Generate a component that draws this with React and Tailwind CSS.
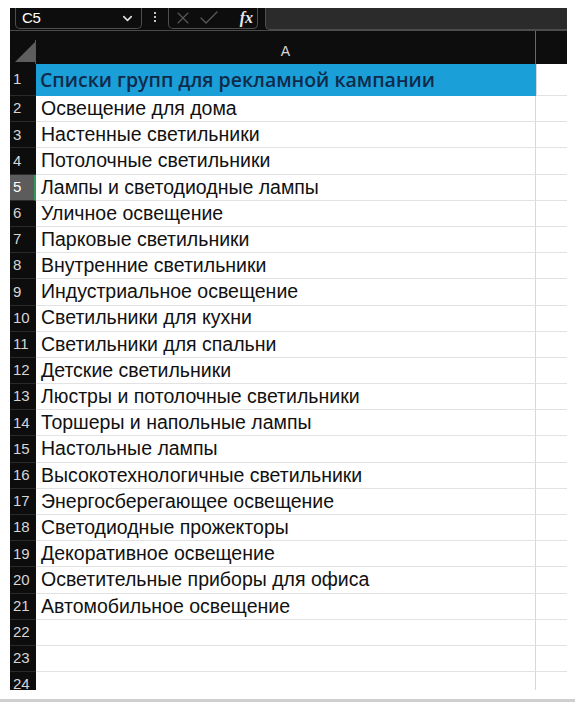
import React from 'react';
import { X, Check, ChevronDown } from 'lucide-react';

const items = [
  'Освещение для дома',
  'Настенные светильники',
  'Потолочные светильники',
  'Лампы и светодиодные лампы',
  'Уличное освещение',
  'Парковые светильники',
  'Внутренние светильники',
  'Индустриальное освещение',
  'Светильники для кухни',
  'Светильники для спальни',
  'Детские светильники',
  'Люстры и потолочные светильники',
  'Торшеры и напольные лампы',
  'Настольные лампы',
  'Высокотехнологичные светильники',
  'Энергосберегающее освещение',
  'Светодиодные прожекторы',
  'Декоративное освещение',
  'Осветительные приборы для офиса',
  'Автомобильное освещение',
  '',
  '',
  '',
];

function RowHead({ n, active }) {
  return (
    <div
      className={
        'w-[26px] shrink-0 flex items-center pl-[3px] text-[15px] border-b border-[#2a2a2a] ' +
        (active ? 'bg-[#5c5c5c] text-white border-r-2 border-r-[#2e9b5a]' : 'bg-[#0d0d0d] text-[#d6d6d6]')
      }
    >
      {n}
    </div>
  );
}

export default function App() {
  return (
    <div className="w-[575px] h-[703px] bg-white overflow-hidden" style={{ fontFamily: '"Liberation Sans", Arial, sans-serif' }}>
      <div className="ml-[10px] mt-[8px] w-[557px] h-[682px] bg-[#0d0d0d] flex flex-col overflow-hidden">
        {/* Formula bar */}
        <div className="h-[23px] shrink-0 flex items-stretch border-b border-[#4a4a4a]">
          <div className="ml-[5px] w-[127px] h-[21px] border-x border-b border-[#4e4e4e] rounded-b-[5px] flex items-center justify-between pl-[6px] pr-[6px]">
            <span className="text-[15px] text-white tracking-tight">C5</span>
            <ChevronDown className="w-[15px] h-[15px] text-[#e0e0e0]" strokeWidth={2.5} />
          </div>
          <div className="w-[26px] flex flex-col items-center justify-center gap-[2px] pb-[4px]">
            <span className="w-[2px] h-[2px] bg-white rounded-full" />
            <span className="w-[2px] h-[2px] bg-white rounded-full" />
            <span className="w-[2px] h-[2px] bg-white rounded-full" />
          </div>
          <div className="w-[90px] h-[21px] border-x border-b border-[#4e4e4e] rounded-b-[5px] flex items-center pl-[4px] pr-[4px] gap-[4px]">
            <X className="w-[20px] h-[20px] text-[#5a5a5a]" strokeWidth={1.3} />
            <Check className="w-[24px] h-[24px] text-[#5a5a5a]" strokeWidth={1.3} />
            <span className="ml-auto text-[16px] text-[#e8e8e8] italic font-bold" style={{ fontFamily: '"Liberation Serif", serif' }}>fx</span>
          </div>
          <div className="ml-[7px] flex-1 h-[22px] bg-[#2b2b2b] border-l border-b border-[#4e4e4e] rounded-bl-[5px]" />
        </div>

        {/* Column header */}
        <div className="h-[33px] shrink-0 flex">
          <div className="w-[26px] shrink-0 relative border-r border-[#5a5a5a] mt-[9px]">
            <div
              className="absolute left-[5px] bottom-[2px] w-[20px] h-[20px] bg-[#5e5e5e]"
              style={{ clipPath: 'polygon(100% 0, 100% 100%, 0 100%)' }}
            />
          </div>
          <div className="w-[500px] shrink-0 flex items-center justify-center text-[14px] text-[#d8d8d8] border-r border-[#6a6a6a] pt-[8px]">
            A
          </div>
          <div className="flex-1" />
        </div>

        {/* Row 1 */}
        <div className="h-[32px] shrink-0 flex">
          <RowHead n={1} />
          <div
            className="w-[500px] shrink-0 bg-[#1b9fd8] flex items-center pl-[4px] text-[19.5px] font-semibold text-[#0f2b4c] whitespace-nowrap"
            style={{ fontFamily: '"Open Sans", sans-serif' }}
          >
            Списки групп для рекламной кампании
          </div>
          <div className="flex-1 bg-white border-l border-[#d8d8d8] border-b border-b-[#e2e2e2]" />
        </div>

        {items.map((t, i) => (
          <div key={i} className="h-[26.2px] shrink-0 flex">
            <RowHead n={i + 2} active={i + 2 === 5} />
            <div className="w-[500px] shrink-0 bg-white flex items-center pl-[5px] text-[19.5px] text-[#111] border-b border-[#e2e2e2] border-r border-r-[#d8d8d8] whitespace-nowrap">
              {t}
            </div>
            <div className="flex-1 bg-white border-b border-[#e2e2e2]" />
          </div>
        ))}
      </div>
      <div className="mt-[9px] h-[3px] bg-[#cfcfcf]" />
    </div>
  );
}
